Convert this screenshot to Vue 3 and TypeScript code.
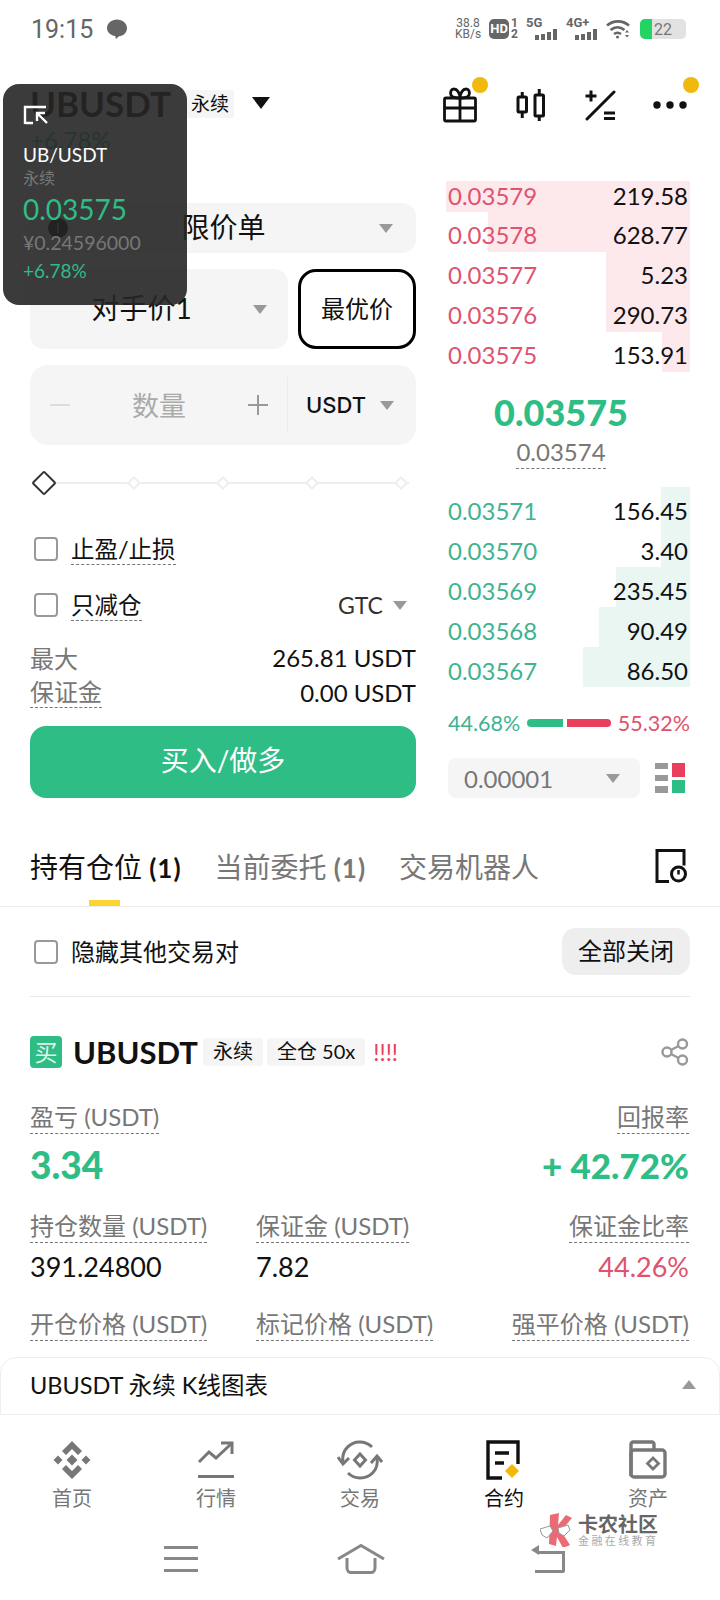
<template>
  <div class="page">
    <!-- status bar -->
    <div class="status">
      <span class="time">19:15</span>
      <svg class="bubble" width="22" height="22" viewBox="0 0 22 22"><path d="M11 1.500c5.500 0 10 3.700 10 8.500 0 4.500-3.500 8-8 8.300l-3 2.700-.8-3C4.500 17.300 1 14.300 1 10c0-4.800 4.500-8.500 10-8.500z" fill="#666" /></svg>
      <div class="status-right">
        <div class="speed"><span>38.8</span><span>KB/s</span></div>
        <div class="hd"><span class="hd-box">HD</span><span class="hd-nums"><i>1</i><i>2</i></span></div>
        <div class="net">
          <span class="net-label">5G</span>
          <svg width="24" height="11" viewBox="0 0 24 11"><path d="M1 6h4v5H1zM7 5h4v6H7zM13 3h4v8h-4zM19 0h4v11h-4z" fill="#666" /></svg>
        </div>
        <div class="net">
          <span class="net-label">4G+</span>
          <svg width="24" height="11" viewBox="0 0 24 11"><path d="M1 6h4v5H1zM7 5h4v6H7zM13 3h4v8h-4zM19 0h4v11h-4z" fill="#666" /></svg>
        </div>
        <svg class="wifi" width="24" height="20" viewBox="0 0 24 20" fill="none" stroke="#666" stroke-width="2.600"><path d="M1 6.500c6.500-5.500 15.500-5.500 22 0M4.500 11c4.300-3.500 9.700-3.500 14 0M8 15c2.300-1.700 4.700-1.700 7 0" /><circle cx="11.500" cy="18" r="1.500" fill="#666" stroke="none" /><path d="M19 13.500l2 -2.500 2 2.500zM19 16l2 2.500 2-2.500z" fill="#666" stroke="none" /></svg>
        <div class="battery"><span class="battery-fill"></span><span class="battery-num">22</span></div>
      </div>
    </div>

    <!-- symbol header -->
    <div class="header">
      <div class="header-left">
        <div class="symbol-row">
          <span class="symbol">UBUSDT</span>
          <span class="symbol-tag">永续</span>
          <span class="symbol-caret"></span>
        </div>
        <div class="symbol-change">+6.78%</div>
      </div>
      <div class="header-icons">
        <div class="head-icon">
          <svg width="36" height="36" viewBox="0 0 36 36" fill="none" stroke="#111" stroke-width="2.800" stroke-linejoin="round"><rect x="2.500" y="11" width="31" height="23" rx="1.500" /><path d="M2.500 21h31M18 11v23" /><path d="M18 11c0-5-3-9-6-9s-4 3-3 6 4 3 9 3zM18 11c0-5 3-9 6-9s4 3 3 6-4 3-9 3z" /></svg>
          <span class="dot gift-dot"></span>
        </div>
        <svg class="head-icon" width="32" height="34" viewBox="0 0 32 34" fill="none" stroke="#111" stroke-width="3" stroke-linejoin="round"><rect x="3" y="9" width="8.500" height="15" rx="1" /><path d="M7.250 4v5M7.250 24v6" /><rect x="20" y="7" width="8.500" height="21" rx="1" /><path d="M24.250 1v6M24.250 28v5" /></svg>
        <svg class="head-icon" width="32" height="32" viewBox="0 0 32 32" fill="none" stroke="#111" stroke-width="3"><path d="M1.500 7h11M7 1.500v11" /><path d="M3 30L30 3" stroke-linecap="round" /><path d="M20 24h11M20 29.500h11" /></svg>
        <div class="head-icon">
          <svg width="34" height="10" viewBox="0 0 34 10" fill="#111"><circle cx="4" cy="5" r="3.700" /><circle cx="17" cy="5" r="3.700" /><circle cx="30" cy="5" r="3.700" /></svg>
          <span class="dot more-dot"></span>
        </div>
      </div>
    </div>

    <div class="main">
      <!-- order form -->
      <div class="form">
        <div class="select select-type">
          <span class="info"></span>
          <span class="select-text">限价单</span>
          <span class="caret"></span>
        </div>
        <div class="price-row">
          <div class="select select-price">
            <span class="select-text">对手价1</span>
            <span class="caret"></span>
          </div>
          <div class="best">最优价</div>
        </div>
        <div class="qty">
          <span class="qty-minus"></span>
          <span class="qty-text">数量</span>
          <span class="qty-plus"></span>
          <span class="qty-unit">USDT</span>
          <span class="caret"></span>
        </div>
        <div class="slider">
          <span class="handle"></span>
          <span v-for="n in 4" :key="n" class="slider-part"><i class="tick"></i></span>
        </div>
        <div class="check-row first">
          <span class="checkbox"></span>
          <span class="dashed">止盈/止损</span>
        </div>
        <div class="check-row second">
          <span class="checkbox"></span>
          <span class="dashed">只减仓</span>
          <span class="gtc">GTC</span>
          <span class="caret"></span>
        </div>
        <div class="info-row top-info"><span class="grey">最大</span><span>265.81 USDT</span></div>
        <div class="info-row"><span class="grey dashed">保证金</span><span>0.00 USDT</span></div>
        <div class="buy">买入/做多</div>
      </div>

      <!-- order book -->
      <div class="book">
        <div v-for="(r, i) in asks" :key="r.price" class="row ask-row" :class="{ 'row-first': i === 0 }">
          <span class="bar ask-bar" :style="{ width: r.depth + 'px' }"></span>
          <span class="ask-price">{{ r.price }}</span>
          <span class="amount">{{ r.amount }}</span>
        </div>
        <div class="mid">
          <div class="mid-price">0.03575</div>
          <div class="mark"><span>0.03574</span></div>
        </div>
        <div v-for="r in bids" :key="r.price" class="row">
          <span class="bar bid-bar" :style="{ width: r.depth + 'px' }"></span>
          <span class="bid-price">{{ r.price }}</span>
          <span class="amount">{{ r.amount }}</span>
        </div>
        <div class="ratio">
          <span class="bid-price">44.68%</span>
          <span class="ratio-green"></span>
          <span class="ratio-red"></span>
          <span class="ask-price">55.32%</span>
        </div>
        <div class="book-foot">
          <div class="tick-select"><span>0.00001</span><span class="caret"></span></div>
          <svg width="30" height="32" viewBox="0 0 30 32"><path d="M0 1h13v6H0zM0 13h13v6H0zM0 24h13v7H0z" fill="#999" /><path d="M17 1h13v14H17z" fill="#ea3f5c" /><path d="M17 18h13v13H17z" fill="#2ebd85" /></svg>
        </div>
      </div>
    </div>

    <!-- tabs -->
    <div class="tabs">
      <div class="tab active">持有仓位 <b>(1)</b><span class="tab-line"></span></div>
      <div class="tab">当前委托 <b>(1)</b></div>
      <div class="tab">交易机器人</div>
      <svg class="tab-icon" width="32" height="34" viewBox="0 0 32 34" fill="none" stroke="#111" stroke-width="3"><path d="M14 32.500H2V1.500h27v15" /><circle cx="23.500" cy="25" r="7" /><path d="M23.500 21v4.500" stroke-width="2.500" /></svg>
    </div>

    <div class="hide-row">
      <span class="checkbox"></span>
      <span class="hide-text">隐藏其他交易对</span>
      <span class="close-all">全部关闭</span>
    </div>

    <!-- position card -->
    <div class="position">
      <div class="pos-head">
        <span class="buy-badge">买</span>
        <span class="pos-symbol">UBUSDT</span>
        <span class="pos-tag">永续</span>
        <span class="pos-tag">全仓 50x</span>
        <span class="warn">!!!!</span>
        <svg class="share" width="28" height="28" viewBox="0 0 28 28" fill="none" stroke="#999" stroke-width="2.400"><circle cx="21.500" cy="6" r="4.500" /><circle cx="6" cy="14" r="4.500" /><circle cx="21.500" cy="22" r="4.500" /><path d="M10 12l7.500-4M10 16l7.500 4" /></svg>
      </div>
      <div class="pnl-labels">
        <span class="label"><em>盈亏 (USDT)</em></span>
        <span class="label"><em>回报率</em></span>
      </div>
      <div class="pnl-values">
        <span>3.34</span>
        <span class="pnl-rate">+ 42.72%</span>
      </div>
      <div class="stats">
        <span class="label"><em>持仓数量 (USDT)</em></span>
        <span class="label"><em>保证金 (USDT)</em></span>
        <span class="label right"><em>保证金比率</em></span>
        <span class="value">391.24800</span>
        <span class="value">7.82</span>
        <span class="value right red">44.26%</span>
        <span class="label gap"><em>开仓价格 (USDT)</em></span>
        <span class="label gap"><em>标记价格 (USDT)</em></span>
        <span class="label gap right"><em>强平价格 (USDT)</em></span>
      </div>
    </div>

    <div class="kline">
      <span>UBUSDT 永续 K线图表</span>
      <span class="caret up"></span>
    </div>

    <!-- bottom nav -->
    <div class="nav">
      <div class="nav-item">
        <svg width="40" height="40" viewBox="0 0 40 40" fill="#777"><path d="M20 1l10 10-4 4-6-6-6 6-4-4zM20 39l10-10-4-4-6 6-6-6-4 4zM1.500 20l4.500-4.500 4.500 4.500-4.500 4.500zM29.500 20l4.500-4.500 4.500 4.500-4.500 4.500zM20 14.500l5.500 5.500-5.500 5.500-5.500-5.500z" /></svg>
        <span>首页</span>
      </div>
      <div class="nav-item">
        <svg width="40" height="40" viewBox="0 0 40 40" fill="none" stroke="#777" stroke-width="3"><path d="M3 22l10-10 7 6L35 4" /><path d="M25 3h11v11" /><path d="M2 36.500h36" /></svg>
        <span>行情</span>
      </div>
      <div class="nav-item">
        <svg width="46" height="40" viewBox="0 0 46 40" fill="none" stroke="#777" stroke-width="3"><path d="M6 22C4 10 14 1 24 2c5 .5 8 2 11 5" /><path d="M40 18c2 12-7 20-17 20-5 0-9-2-12-5" /><path d="M1 17l5 7 6-6M34 23l6-7 5 6" /><path d="M23 14l5.500 6-5.500 6-5.500-6z" /></svg>
        <span>交易</span>
      </div>
      <div class="nav-item nav-active">
        <svg width="36" height="40" viewBox="0 0 36 40" fill="none" stroke="#111" stroke-width="3.400"><path d="M16 38H2V2h30v22" /><path d="M9 13h14M9 23h9" /><path d="M26 24l7 7-7 7-7-7z" fill="#f0b90b" stroke="none" /></svg>
        <span>合约</span>
      </div>
      <div class="nav-item">
        <svg width="38" height="40" viewBox="0 0 38 40" fill="none" stroke="#777" stroke-width="3.400"><path d="M2 36V4c0-1 1-2 2-2h19c1 0 2 1 2 2v6" /><rect x="2" y="10" width="34" height="27" rx="3" /><path d="M24 18l5.500 5.500-5.500 5.500-5.500-5.500z" stroke-width="2.800" /></svg>
        <span>资产</span>
      </div>
    </div>

    <div class="sys">
      <svg width="34" height="26" viewBox="0 0 34 26" fill="#888"><path d="M0 0h34v3H0zM0 11h34v3H0zM0 23h34v3H0z" /></svg>
      <svg class="sys-home" width="48" height="30" viewBox="0 0 48 30" fill="none" stroke="#888" stroke-width="3"><path d="M1 15L24 1.500 47 15" /><path d="M10 14v10c0 3 2 4.500 4 4.500h20c2 0 4-1.500 4-4.500V14" /></svg>
      <svg width="36" height="30" viewBox="0 0 36 30" fill="#888"><path d="M6 7h28v20a2 2 0 0 1-2 2H4v-3h27V10H6z" /><path d="M0 6l8-5v10z" /></svg>
    </div>

    <!-- floating ticker window -->
    <div class="float">
      <svg width="26" height="20" viewBox="0 0 26 20" fill="none" stroke="#fff" stroke-width="2.400"><path d="M2 19V2h21M2 18h8" /><path d="M24 18L14 8M14 16V8h8" /></svg>
      <div class="float-pair">UB/USDT</div>
      <div class="float-tag">永续</div>
      <div class="float-price">0.03575</div>
      <div class="float-cny">¥0.24596000</div>
      <div class="float-change">+6.78%</div>
    </div>

    <!-- watermark -->
    <div class="mark-logo">
      <svg width="34" height="34" viewBox="0 0 34 34"><path d="M10 2l9-2-1 12 8-10 6 3-11 13 9 14-7 3-6-11-1 9-7-2z" fill="#ea6a75" /><path d="M0 16l10-3 3 5-6 7-5-3zM18 15l10-3 2 5-6 6-5-3z" fill="#fff" stroke="#999" stroke-width="1" /></svg>
      <div class="mark-text">
        <div class="mark-title">卡农社区</div>
        <div class="mark-sub">金融在线教育</div>
      </div>
    </div>
  </div>
</template>

<script setup lang="ts">
interface BookRow {
  price: string;
  amount: string;
  depth: number;
}

const asks: BookRow[] = [
  { price: '0.03579', amount: '219.58', depth: 244 },
  { price: '0.03578', amount: '628.77', depth: 202 },
  { price: '0.03577', amount: '5.23', depth: 84 },
  { price: '0.03576', amount: '290.73', depth: 84 },
  { price: '0.03575', amount: '153.91', depth: 28 }
];

const bids: BookRow[] = [
  { price: '0.03571', amount: '156.45', depth: 29 },
  { price: '0.03570', amount: '3.40', depth: 29 },
  { price: '0.03569', amount: '235.45', depth: 74 },
  { price: '0.03568', amount: '90.49', depth: 91 },
  { price: '0.03567', amount: '86.50', depth: 107 }
];
</script>

<style>
html,
body {
  margin: 0;
  background: #fff;
}
</style>

<style scoped>
.page {
  position: relative;
  width: 720px;
  height: 1600px;
  overflow: hidden;
  background: #fff;
  color: #111;
  font-family: Lato, "Noto Sans CJK SC", sans-serif;
  font-size: 24px;
}

/* status bar */
.status {
  height: 58px;
  display: flex;
  align-items: center;
  padding: 0 34px 0 31px;
  color: #666;
}
.time {
  font-family: Roboto, sans-serif;
  font-size: 25px;
  width: 75px;
}
.status-right {
  margin-left: auto;
  display: flex;
  align-items: center;
  gap: 8px;
}
.speed {
  display: flex;
  flex-direction: column;
  align-items: center;
  font-family: Roboto, sans-serif;
  font-size: 12px;
  line-height: 11px;
}
.hd {
  display: flex;
  align-items: center;
}
.hd-box {
  background: #666;
  color: #fff;
  border-radius: 5px;
  width: 20px;
  height: 20px;
  line-height: 20px;
  text-align: center;
  font-family: Roboto, sans-serif;
  font-size: 13px;
  font-weight: 700;
}
.hd-nums {
  display: flex;
  flex-direction: column;
  font-family: Roboto, sans-serif;
  font-size: 12px;
  font-weight: 700;
  line-height: 11px;
  margin-left: 2px;
}
.hd-nums i {
  font-style: normal;
}
.net {
  position: relative;
  width: 32px;
  height: 22px;
  display: flex;
  justify-content: flex-end;
  align-items: flex-end;
}
.net-label {
  position: absolute;
  left: 0;
  top: -3px;
  font-family: Roboto, sans-serif;
  font-size: 13px;
  font-weight: 700;
}
.battery {
  width: 46px;
  height: 20px;
  border-radius: 5px;
  background: #e2e2e2;
  display: flex;
  align-items: center;
  overflow: hidden;
  margin-left: 2px;
}
.battery-fill {
  width: 12px;
  height: 20px;
  background: #22d462;
}
.battery-num {
  font-family: Roboto, sans-serif;
  font-size: 16px;
  color: #777;
  margin-left: 2px;
}

/* header */
.header {
  height: 123px;
  padding: 20px 33px 0 30px;
  box-sizing: border-box;
  display: flex;
  justify-content: space-between;
}
.symbol-row {
  height: 50px;
  display: flex;
  align-items: center;
}
.symbol {
  font-size: 35px;
  font-weight: 700;
  width: 156px;
  white-space: nowrap;
}
.symbol-tag {
  background: #f5f5f5;
  font-size: 19px;
  line-height: 28px;
  padding: 0 5px;
  border-radius: 3px;
  position: relative;
  top: 1px;
}
.symbol-caret {
  margin-left: 18px;
  border-left: 9px solid transparent;
  border-right: 9px solid transparent;
  border-top: 12px solid #111;
}
.symbol-change {
  margin-top: 2px;
  font-size: 24px;
  line-height: 20px;
  color: #2ebd85;
}
.header-icons {
  display: flex;
  align-items: center;
  gap: 37px;
  height: 54px;
}
.head-icon {
  position: relative;
  display: flex;
}
.dot {
  position: absolute;
  width: 16px;
  height: 16px;
  border-radius: 50%;
  background: #f0b90b;
}
.gift-dot {
  left: 30px;
  top: -10px;
}
.more-dot {
  left: 30px;
  top: -23px;
}

/* order form */
.main {
  height: 617px;
  display: flex;
}
.form {
  width: 386px;
  margin-left: 30px;
  padding-top: 22px;
}
.select {
  background: #f5f5f5;
  border-radius: 14px;
  display: flex;
  align-items: center;
}
.select-text {
  flex: 1;
  text-align: center;
  font-size: 28px;
  padding-bottom: 4px;
}
.caret {
  flex: none;
  width: 0;
  height: 0;
  border-left: 7px solid transparent;
  border-right: 7px solid transparent;
  border-top: 9px solid #999;
}
.caret.up {
  border-top: 0;
  border-bottom: 9px solid #999;
}
.select-type {
  height: 50px;
  padding: 0 23px 0 18px;
}
.info {
  width: 20px;
  height: 20px;
  border-radius: 50%;
  background: #000;
  display: flex;
  align-items: center;
  justify-content: center;
}
.info::after {
  content: "";
  width: 2px;
  height: 10px;
  background: #777;
}
.price-row {
  display: flex;
  gap: 10px;
  margin-top: 16px;
}
.select-price {
  width: 258px;
  height: 80px;
  padding-right: 21px;
  box-sizing: border-box;
}
.best {
  flex: 1;
  height: 80px;
  box-sizing: border-box;
  border: 3px solid #000;
  border-radius: 18px;
  padding-bottom: 4px;
  display: flex;
  align-items: center;
  justify-content: center;
}
.qty {
  margin-top: 16px;
  height: 80px;
  background: #f5f5f5;
  border-radius: 18px;
  display: flex;
  align-items: center;
  padding: 0 24px 0 20px;
}
.qty-minus {
  flex: none;
  width: 20px;
  height: 2px;
  background: #ddd;
}
.qty-text {
  flex: none;
  margin-left: 62px;
  font-size: 27px;
  color: #aaa;
  width: 54px;
  padding-bottom: 2px;
  white-space: nowrap;
}
.qty-plus {
  flex: none;
  position: relative;
  margin-left: 62px;
  width: 20px;
  height: 2px;
  background: #999;
}
.qty-plus::after {
  content: "";
  position: absolute;
  left: 9px;
  top: -9px;
  width: 2px;
  height: 20px;
  background: #999;
}
.qty-unit {
  flex: none;
  box-sizing: border-box;
  margin-left: 19px;
  padding-left: 18px;
  border-left: 1px solid #ebebeb;
  line-height: 56px;
  font-family: Inter, sans-serif;
  font-size: 22px;
  font-weight: 500;
  width: 93px;
}
.slider {
  margin: 28px 7px 0 0;
  height: 20px;
  display: flex;
  align-items: center;
}
.handle {
  flex: none;
  width: 18px;
  height: 18px;
  margin-left: 5px;
  transform: rotate(45deg);
  box-sizing: border-box;
  border: 2px solid #333;
  background: #fff;
  border-radius: 2px;
}
.slider-part {
  flex: 1;
  height: 2px;
  background: #eee;
  display: flex;
  justify-content: flex-end;
  align-items: center;
}
.tick {
  width: 10px;
  height: 10px;
  transform: rotate(45deg);
  box-sizing: border-box;
  border: 2px solid #eee;
  background: #fff;
  margin-right: 3px;
}
.check-row {
  height: 40px;
  display: flex;
  align-items: center;
  gap: 13px;
  padding-left: 4px;
  font-size: 23.500px;
}
.check-row.first {
  margin-top: 36px;
}
.check-row.second {
  margin-top: 16px;
}
.checkbox {
  flex: none;
  width: 24px;
  height: 24px;
  box-sizing: border-box;
  border: 2px solid #999;
  border-radius: 4px;
}
.dashed {
  border-bottom: 1px dashed #777;
  line-height: 30px;
}
.gtc {
  margin-left: auto;
  font-size: 23px;
  color: #333;
}
.check-row .caret {
  margin: 0 9px 0 -3px;
}
.info-row {
  height: 35px;
  display: flex;
  align-items: center;
  justify-content: space-between;
}
.top-info {
  margin-top: 15px;
}
.grey {
  color: #777;
}
.buy {
  margin-top: 16px;
  height: 72px;
  line-height: 68px;
  text-align: center;
  background: #2ebd85;
  border-radius: 16px;
  color: #fff;
  font-size: 28px;
}

/* order book */
.book {
  width: 244px;
  margin-left: 30px;
}
.row {
  position: relative;
  height: 40px;
  box-sizing: border-box;
  padding: 8px 2px 0 2px;
  line-height: 32px;
  display: flex;
  justify-content: space-between;
}
.ask-row {
  padding-top: 7px;
}
.row-first {
  height: 31px;
  padding-top: 0;
  line-height: 29px;
}
.row > span:not(.bar) {
  position: relative;
}
.bar {
  position: absolute;
  right: 0;
  top: 0;
  bottom: 0;
}
.ask-bar {
  background: #fde9ec;
}
.bid-bar {
  background: #e9f6f2;
}
.ask-price {
  color: #e0526e;
}
.bid-price {
  color: #3fb391;
}
.amount {
  color: #111;
}
.mid {
  height: 115px;
  box-sizing: border-box;
  padding: 19px 14px 0 0;
  text-align: center;
}
.mid-price {
  color: #2ebd85;
  font-size: 36px;
  font-weight: 900;
  line-height: 42px;
}
.mark {
  margin-top: 3px;
  color: #777;
  line-height: 32px;
}
.mark span {
  display: inline-block;
  border-bottom: 1px dashed #777;
}
.ratio {
  margin-top: 22px;
  height: 28px;
  display: flex;
  align-items: center;
  font-size: 21.500px;
  padding-left: 2px;
  white-space: nowrap;
}
.ratio-green {
  width: 38px;
  height: 8px;
  margin-left: 7px;
  background: #2ebd85;
  border-radius: 4px 0 0 4px;
}
.ratio-red {
  width: 46px;
  height: 8px;
  margin: 0 7px 0 4px;
  background: #ea3f5c;
  border-radius: 0 4px 4px 0;
}
.book-foot {
  margin-top: 21px;
  display: flex;
  align-items: center;
  justify-content: space-between;
  padding: 0 5px 0 2px;
}
.tick-select {
  width: 192px;
  height: 40px;
  box-sizing: border-box;
  padding: 0 20px 0 16px;
  background: #f5f5f5;
  border-radius: 8px;
  color: #777;
  display: flex;
  align-items: center;
  justify-content: space-between;
}

/* tabs */
.tabs {
  height: 109px;
  box-sizing: border-box;
  padding: 50px 33px 0 30px;
  border-bottom: 1px solid #eee;
  display: flex;
  gap: 33px;
  align-items: flex-start;
}
.tab {
  position: relative;
  font-size: 28px;
  line-height: 38px;
  color: #777;
  white-space: nowrap;
}
.tab b {
  font-size: 26px;
  font-weight: 700;
  letter-spacing: 1px;
}
.tab.active {
  color: #111;
}
.tab-line {
  position: absolute;
  left: 59px;
  top: 52px;
  width: 31px;
  height: 6px;
  background: #fcd535;
}
.tab-icon {
  margin: 1px 0 0 auto;
}
.hide-row {
  margin: 0 30px;
  height: 90px;
  box-sizing: border-box;
  border-bottom: 1px solid #e9e9e9;
  padding: 0 0 0 4px;
  display: flex;
  align-items: center;
}
.hide-text {
  margin-left: 13px;
  padding-bottom: 2px;
}
.close-all {
  margin-left: auto;
  width: 128px;
  height: 47px;
  line-height: 45px;
  text-align: center;
  background: #eee;
  border-radius: 14px;
}

/* position */
.position {
  padding: 0 31px 0 30px;
}
.pos-head {
  margin-top: 39px;
  height: 32px;
  display: flex;
  align-items: center;
}
.buy-badge {
  width: 32px;
  height: 32px;
  line-height: 32px;
  text-align: center;
  background: #2ebd85;
  color: #dff5ec;
  border-radius: 4px;
  font-size: 23px;
}
.pos-symbol {
  margin-left: 11px;
  font-size: 31px;
  font-weight: 700;
  width: 130px;
}
.pos-tag {
  height: 28px;
  line-height: 27px;
  padding: 0 10px;
  margin-right: 4px;
  background: #f5f5f5;
  border-radius: 3px;
  font-size: 20px;
}
.warn {
  margin-left: 4px;
  color: #ea3f5c;
  font-size: 23px;
}
.share {
  margin-left: auto;
}
.pnl-labels {
  margin-top: 32px;
  display: flex;
  justify-content: space-between;
}
.label {
  line-height: 33px;
  color: #777;
  white-space: nowrap;
}
.label em {
  font-style: normal;
  display: inline-block;
  border-bottom: 1px dashed #777;
}
.pnl-values {
  margin-top: 9px;
  height: 44px;
  line-height: 44px;
  display: flex;
  justify-content: space-between;
  font-size: 37px;
  font-weight: 900;
  color: #2ebd85;
}
.pnl-rate {
  font-size: 35px;
}
.stats {
  margin-top: 22px;
  display: grid;
  grid-template-columns: 226px 1fr auto;
}
.right {
  text-align: right;
}
.value {
  font-size: 27px;
  line-height: 36px;
  margin-top: 6px;
}
.red {
  color: #e0526e;
}
.gap {
  margin-top: 22px;
}

/* bottom */
.kline {
  position: absolute;
  left: 0;
  right: 0;
  top: 1357px;
  height: 58px;
  box-sizing: border-box;
  background: #fff;
  border: 1px solid #eee;
  border-radius: 16px 16px 0 0;
  padding: 0 23px 4px 29px;
  font-size: 23.500px;
  display: flex;
  align-items: center;
  justify-content: space-between;
}
.nav {
  position: absolute;
  left: 0;
  right: 0;
  top: 1440px;
  display: grid;
  grid-template-columns: repeat(5, 144px);
}
.nav-item {
  display: flex;
  flex-direction: column;
  align-items: center;
  color: #777;
  font-size: 20px;
}
.nav-item span {
  margin-top: 2px;
  line-height: 32px;
}
.nav-active {
  color: #111;
}
.sys {
  position: absolute;
  left: 164px;
  right: 153px;
  top: 1544px;
  display: flex;
  justify-content: space-between;
  align-items: center;
}
.sys-home {
  margin-right: 8px;
}

/* floating window */
.float {
  position: absolute;
  left: 3px;
  top: 84px;
  width: 184px;
  height: 221px;
  box-sizing: border-box;
  padding: 21px 0 0 20px;
  background: rgba(38, 38, 38, 0.9);
  border-radius: 16px;
  color: #fff;
}
.float svg {
  display: block;
}
.float-pair {
  margin-top: 16px;
  font-size: 19px;
  line-height: 27px;
}
.float-tag {
  font-size: 16px;
  line-height: 19px;
  color: #777;
}
.float-price {
  margin-top: 3px;
  font-size: 28px;
  line-height: 38px;
  color: #2ebd85;
}
.float-cny {
  font-size: 19.500px;
  line-height: 30px;
  color: #777;
}
.float-change {
  margin-top: -1px;
  font-size: 19px;
  line-height: 28px;
  color: #2ebd85;
}

/* watermark */
.mark-logo {
  position: absolute;
  left: 540px;
  top: 1513px;
  display: flex;
  gap: 4px;
}
.mark-title {
  font-size: 20px;
  line-height: 22px;
  font-weight: 700;
  color: #666;
}
.mark-sub {
  font-size: 11px;
  line-height: 12px;
  letter-spacing: 2.400px;
  color: #aaa;
}
</style>
